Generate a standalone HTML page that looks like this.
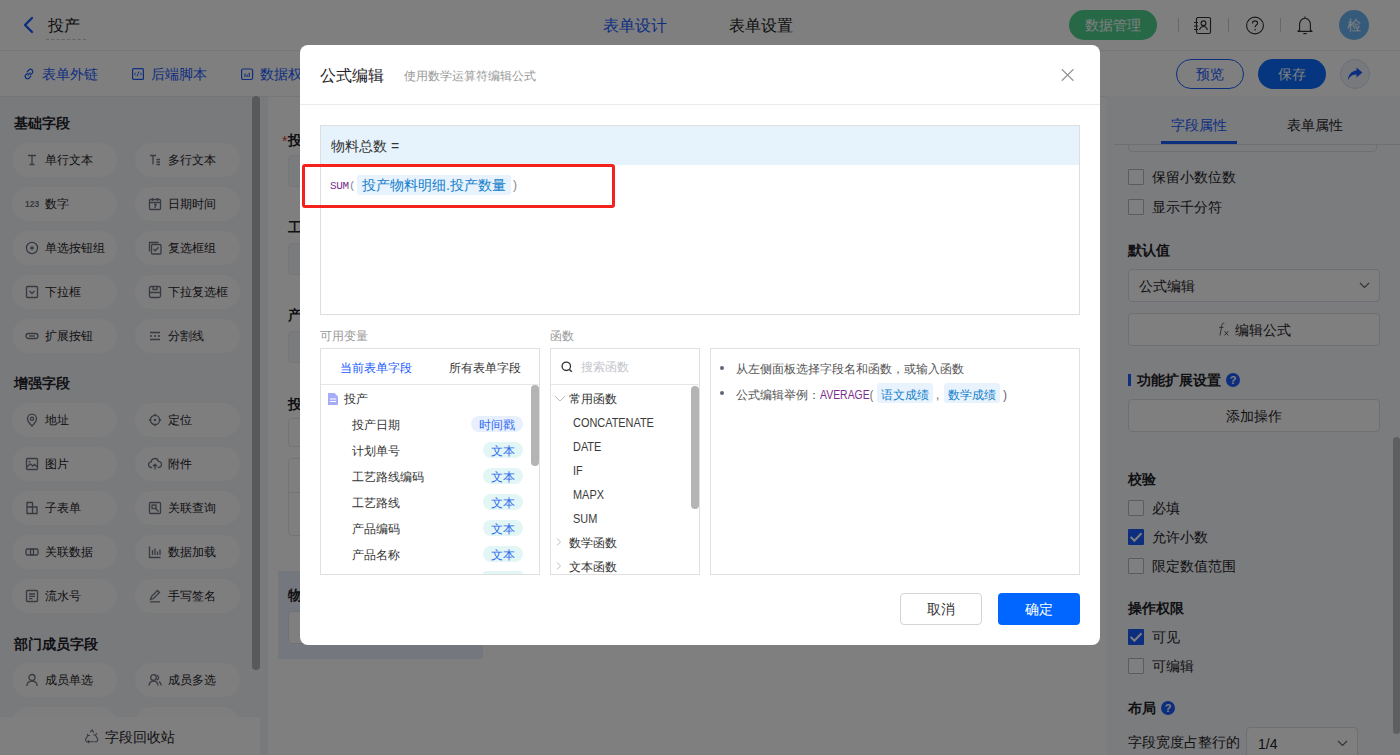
<!DOCTYPE html>
<html><head><meta charset="utf-8">
<style>
*{box-sizing:border-box;margin:0;padding:0}
html,body{width:1400px;height:755px;overflow:hidden;font-family:"Liberation Sans",sans-serif;color:#333;background:#fff}
.a{position:absolute}
.t{position:absolute;white-space:nowrap;line-height:1}
#page{position:absolute;left:0;top:0;width:1400px;height:755px;background:#fff}
#mask{position:absolute;left:0;top:0;width:1400px;height:755px;background:rgba(0,0,0,.5)}
</style></head><body>
<div id="page">
  <!-- header -->
  <div class="a" style="left:0;top:0;width:1400px;height:51px;background:#fff;border-bottom:1px solid #ececec"></div>
  <svg class="a" style="left:20px;top:15px" width="16" height="20" viewBox="0 0 16 20"><polyline points="12,3 5,10 12,17" fill="none" stroke="#1a5cff" stroke-width="2.4" stroke-linecap="round" stroke-linejoin="round"/></svg>
  <div class="t" style="left:48px;top:18px;font-size:16px;color:#222">投产</div>
  <div class="a" style="left:46px;top:39px;width:40px;border-top:1px dashed #c8c8c8"></div>
  <div class="t" style="left:603px;top:18px;font-size:16px;color:#1a5cff">表单设计</div>
  <div class="t" style="left:729px;top:18px;font-size:16px;color:#222">表单设置</div>
  <div class="a" style="left:1069px;top:10px;width:88px;height:30px;border-radius:15px;background:#4fd08f"></div>
  <div class="t" style="left:1085px;top:18px;font-size:14px;color:#fff">数据管理</div>
  <div class="a" style="left:1178px;top:18px;width:1px;height:14px;background:#d0d0d0"></div>
  <div class="a" style="left:1228px;top:18px;width:1px;height:14px;background:#d0d0d0"></div>
  <div class="a" style="left:1280px;top:18px;width:1px;height:14px;background:#d0d0d0"></div>
  <svg class="a" style="left:1192px;top:16px" width="20" height="19" viewBox="0 0 20 19"><rect x="4.5" y="1.5" width="14" height="16" rx="1.5" fill="none" stroke="#333" stroke-width="1.15"/><circle cx="11.5" cy="7.2" r="2.4" fill="none" stroke="#333" stroke-width="1.15"/><path d="M7.6 14c0.5-2.4 1.9-3.5 3.9-3.5s3.4 1.1 3.9 3.5" fill="none" stroke="#333" stroke-width="1.15"/><path d="M2 6.5h4M2 10h4M2 13.5h4" stroke="#333" stroke-width="1.1"/></svg>
  <svg class="a" style="left:1245px;top:16px" width="20" height="20" viewBox="0 0 20 20"><circle cx="10" cy="9.5" r="8.4" fill="none" stroke="#333" stroke-width="1.15"/><path d="M7.4 7.4c0-1.5 1.1-2.6 2.6-2.6s2.6 1 2.6 2.4c0 1.9-2.5 1.9-2.5 4" fill="none" stroke="#333" stroke-width="1.2"/><circle cx="10.1" cy="13.7" r="0.8" fill="#333"/></svg>
  <svg class="a" style="left:1296px;top:15px" width="18" height="20" viewBox="0 0 18 20"><path d="M9 1.5v1.6M3.6 15V9.2c0-3.2 2.4-5.9 5.4-5.9s5.4 2.7 5.4 5.9V15l1.6 1.3H2z" fill="none" stroke="#333" stroke-width="1.15" stroke-linejoin="round"/><path d="M7.3 18.6h3.4" stroke="#333" stroke-width="1.2"/></svg>
  <div class="a" style="left:1339px;top:10px;width:30px;height:30px;border-radius:50%;background:#6ab4f5"></div>
  <div class="t" style="left:1347px;top:18px;font-size:14px;color:#fff">检</div>
  <!-- toolbar -->
  <div class="a" style="left:0;top:51px;width:1400px;height:46px;background:#fff"></div>
  <svg class="a" style="left:22px;top:67px" width="14" height="14" viewBox="0 0 14 14"><path d="M6 8l2.2-2.2M5.2 4.6l1.6-1.6a2.3 2.3 0 0 1 3.3 3.3L8.5 7.9M8.8 9.4l-1.6 1.6a2.3 2.3 0 0 1-3.3-3.3L5.5 6.1" fill="none" stroke="#1a5cff" stroke-width="1.2" stroke-linecap="round"/></svg>
  <div class="t" style="left:42px;top:67px;font-size:14px;color:#1a5cff">表单外链</div>
  <svg class="a" style="left:131px;top:67px" width="14" height="14" viewBox="0 0 14 14"><rect x="1.6" y="1.6" width="10.8" height="10.8" rx="1" fill="none" stroke="#1a5cff" stroke-width="1.2"/><path d="M4.8 5.5L3.4 7l1.4 1.5M9.2 5.5L10.6 7 9.2 8.5M7.8 4.6L6.2 9.4" fill="none" stroke="#1a5cff" stroke-width="0.9"/></svg>
  <div class="t" style="left:151px;top:67px;font-size:14px;color:#1a5cff">后端脚本</div>
  <svg class="a" style="left:240px;top:67px" width="14" height="14" viewBox="0 0 14 14"><rect x="1.6" y="2" width="11" height="10.5" rx="1.5" fill="none" stroke="#1a5cff" stroke-width="1.2"/><path d="M5 6.5v3.5M7.1 7.5v2.5M9.2 5.8v4.2" stroke="#1a5cff" stroke-width="1.1"/></svg>
  <div class="t" style="left:260px;top:67px;font-size:14px;color:#1a5cff">数据权限</div>
  <div class="a" style="left:1176px;top:59px;width:68px;height:30px;border-radius:15px;border:1px solid #1a5cff;background:#fff"></div>
  <div class="t" style="left:1196px;top:67px;font-size:14px;color:#1a5cff">预览</div>
  <div class="a" style="left:1258px;top:59px;width:68px;height:30px;border-radius:15px;background:#0a6cff"></div>
  <div class="t" style="left:1278px;top:67px;font-size:14px;color:#fff">保存</div>
  <div class="a" style="left:1340px;top:59px;width:30px;height:30px;border-radius:50%;border:1px solid #d6def0;background:#eef2fa"></div>
  <svg class="a" style="left:1347px;top:67px" width="17" height="15" viewBox="0 0 17 15"><path d="M9.5 0.6l5.9 4.9-5.9 4.9V7.6C5.8 7.6 3 9.2 0.9 13.1c0.5-5.6 3.5-9 8.6-9.6z" fill="#1a5cff"/></svg>
  <!-- left panel -->
  <div class="a" style="left:0;top:96px;width:268px;height:659px;background:#f3f5f9;border-top:1px solid #e9ebef"></div>
  <div class="t" style="left:14px;top:116px;font-size:14px;font-weight:700;color:#1f2329">基础字段</div>
  <div class="a" style="left:12px;top:143px;width:105px;height:34px;border-radius:17px;background:#fcfcfd"></div>
  <svg class="a" style="left:25px;top:153px" width="14" height="14" viewBox="0 0 14 14"><path d="M3 2.5h8M7 2.5v9M4.5 11.5h5" stroke="#6e7483" fill="none" stroke-width="1.3"/></svg>
  <div class="t" style="left:45px;top:154px;font-size:12px;color:#1f2329">单行文本</div>
  <div class="a" style="left:135px;top:143px;width:105px;height:34px;border-radius:17px;background:#fcfcfd"></div>
  <svg class="a" style="left:148px;top:153px" width="14" height="14" viewBox="0 0 14 14"><path d="M2 2.5h6M5 2.5v9M8.5 6.5h3.5M8.5 9h3.5M8.5 11.5h3.5" stroke="#6e7483" fill="none" stroke-width="1.3"/></svg>
  <div class="t" style="left:168px;top:154px;font-size:12px;color:#1f2329">多行文本</div>
  <div class="a" style="left:12px;top:187px;width:105px;height:34px;border-radius:17px;background:#fcfcfd"></div>
  <svg class="a" style="left:25px;top:197px" width="14" height="14" viewBox="0 0 14 14"><text x="0" y="9.8" font-size="8.5" font-weight="700" fill="#6e7483" font-family="Liberation Sans">123</text></svg>
  <div class="t" style="left:45px;top:198px;font-size:12px;color:#1f2329">数字</div>
  <div class="a" style="left:135px;top:187px;width:105px;height:34px;border-radius:17px;background:#fcfcfd"></div>
  <svg class="a" style="left:148px;top:197px" width="14" height="14" viewBox="0 0 14 14"><rect x="1.5" y="2.5" width="11" height="10" rx="1" stroke="#6e7483" fill="none" stroke-width="1.3"/><path d="M1.5 5.5h11M4.5 1v3M9.5 1v3M6 7.5h2l-1.2 3.5" stroke="#6e7483" fill="none" stroke-width="1.3" stroke-width="1"/></svg>
  <div class="t" style="left:168px;top:198px;font-size:12px;color:#1f2329">日期时间</div>
  <div class="a" style="left:12px;top:231px;width:105px;height:34px;border-radius:17px;background:#fcfcfd"></div>
  <svg class="a" style="left:25px;top:241px" width="14" height="14" viewBox="0 0 14 14"><circle cx="7" cy="7" r="5.6" stroke="#6e7483" fill="none" stroke-width="1.3"/><circle cx="7" cy="7" r="1.8" fill="#6e7483"/></svg>
  <div class="t" style="left:45px;top:242px;font-size:12px;color:#1f2329">单选按钮组</div>
  <div class="a" style="left:135px;top:231px;width:105px;height:34px;border-radius:17px;background:#fcfcfd"></div>
  <svg class="a" style="left:148px;top:241px" width="14" height="14" viewBox="0 0 14 14"><path d="M1.5 10.5V1.5h9" stroke="#6e7483" fill="none" stroke-width="1.3"/><rect x="3.5" y="3.5" width="9.5" height="9.5" rx="1" stroke="#6e7483" fill="none" stroke-width="1.3"/><path d="M5.5 8l1.7 1.7 3.3-3.4" stroke="#6e7483" fill="none" stroke-width="1.3"/></svg>
  <div class="t" style="left:168px;top:242px;font-size:12px;color:#1f2329">复选框组</div>
  <div class="a" style="left:12px;top:275px;width:105px;height:34px;border-radius:17px;background:#fcfcfd"></div>
  <svg class="a" style="left:25px;top:285px" width="14" height="14" viewBox="0 0 14 14"><rect x="1.5" y="1.5" width="11" height="11" rx="1" stroke="#6e7483" fill="none" stroke-width="1.3"/><path d="M4.5 6l2.5 2.5L9.5 6" stroke="#6e7483" fill="none" stroke-width="1.3"/></svg>
  <div class="t" style="left:45px;top:286px;font-size:12px;color:#1f2329">下拉框</div>
  <div class="a" style="left:135px;top:275px;width:105px;height:34px;border-radius:17px;background:#fcfcfd"></div>
  <svg class="a" style="left:148px;top:285px" width="14" height="14" viewBox="0 0 14 14"><rect x="1.5" y="1.5" width="11" height="11" rx="1.5" stroke="#6e7483" fill="none" stroke-width="1.3"/><path d="M1.5 7.5h11M5 1.5v3h4v-3" stroke="#6e7483" fill="none" stroke-width="1.3"/></svg>
  <div class="t" style="left:168px;top:286px;font-size:12px;color:#1f2329">下拉复选框</div>
  <div class="a" style="left:12px;top:319px;width:105px;height:34px;border-radius:17px;background:#fcfcfd"></div>
  <svg class="a" style="left:25px;top:329px" width="14" height="14" viewBox="0 0 14 14"><rect x="1" y="4.5" width="12" height="5" rx="2.5" stroke="#6e7483" fill="none" stroke-width="1.3"/><path d="M4 7h6" stroke="#6e7483" fill="none" stroke-width="1.3"/></svg>
  <div class="t" style="left:45px;top:330px;font-size:12px;color:#1f2329">扩展按钮</div>
  <div class="a" style="left:135px;top:319px;width:105px;height:34px;border-radius:17px;background:#fcfcfd"></div>
  <svg class="a" style="left:148px;top:329px" width="14" height="14" viewBox="0 0 14 14"><path d="M2 3.5h10M2 10.5h10M2 7h2M6 7h2M10 7h2" stroke="#6e7483" fill="none" stroke-width="1.3"/></svg>
  <div class="t" style="left:168px;top:330px;font-size:12px;color:#1f2329">分割线</div>
  <div class="t" style="left:14px;top:376px;font-size:14px;font-weight:700;color:#1f2329">增强字段</div>
  <div class="a" style="left:12px;top:403px;width:105px;height:34px;border-radius:17px;background:#fcfcfd"></div>
  <svg class="a" style="left:25px;top:413px" width="14" height="14" viewBox="0 0 14 14"><path d="M7 13s-4.5-4.3-4.5-7.3a4.5 4.5 0 0 1 9 0C11.5 8.7 7 13 7 13z" stroke="#6e7483" fill="none" stroke-width="1.3"/><circle cx="7" cy="5.8" r="1.6" stroke="#6e7483" fill="none" stroke-width="1.3"/></svg>
  <div class="t" style="left:45px;top:414px;font-size:12px;color:#1f2329">地址</div>
  <div class="a" style="left:135px;top:403px;width:105px;height:34px;border-radius:17px;background:#fcfcfd"></div>
  <svg class="a" style="left:148px;top:413px" width="14" height="14" viewBox="0 0 14 14"><circle cx="7" cy="7" r="4.6" stroke="#6e7483" fill="none" stroke-width="1.3"/><circle cx="7" cy="7" r="1.2" fill="#6e7483"/><path d="M7 0.8v2.4M7 10.8v2.4M0.8 7h2.4M10.8 7h2.4" stroke="#6e7483" fill="none" stroke-width="1.3"/></svg>
  <div class="t" style="left:168px;top:414px;font-size:12px;color:#1f2329">定位</div>
  <div class="a" style="left:12px;top:447px;width:105px;height:34px;border-radius:17px;background:#fcfcfd"></div>
  <svg class="a" style="left:25px;top:457px" width="14" height="14" viewBox="0 0 14 14"><rect x="1.5" y="1.5" width="11" height="11" rx="1" stroke="#6e7483" fill="none" stroke-width="1.3"/><path d="M2 10l3.2-3.2 2.5 2.3 1.8-1.6 2.5 2.3" stroke="#6e7483" fill="none" stroke-width="1.3"/><circle cx="4.5" cy="4.6" r="0.9" fill="#6e7483"/></svg>
  <div class="t" style="left:45px;top:458px;font-size:12px;color:#1f2329">图片</div>
  <div class="a" style="left:135px;top:447px;width:105px;height:34px;border-radius:17px;background:#fcfcfd"></div>
  <svg class="a" style="left:148px;top:457px" width="14" height="14" viewBox="0 0 14 14"><path d="M4.2 10.5H3.5a2.8 2.8 0 0 1-.3-5.6A3.6 3.6 0 0 1 10.3 4.3a3.1 3.1 0 0 1 .2 6.2H9.8M7 12.5V7.3M5 9.2l2-2 2 2" stroke="#6e7483" fill="none" stroke-width="1.3"/></svg>
  <div class="t" style="left:168px;top:458px;font-size:12px;color:#1f2329">附件</div>
  <div class="a" style="left:12px;top:491px;width:105px;height:34px;border-radius:17px;background:#fcfcfd"></div>
  <svg class="a" style="left:25px;top:501px" width="14" height="14" viewBox="0 0 14 14"><path d="M2 1.5h5.5v11H2zM7.5 6h4.5v6.5H7.5M2 6h5.5" stroke="#6e7483" fill="none" stroke-width="1.3"/></svg>
  <div class="t" style="left:45px;top:502px;font-size:12px;color:#1f2329">子表单</div>
  <div class="a" style="left:135px;top:491px;width:105px;height:34px;border-radius:17px;background:#fcfcfd"></div>
  <svg class="a" style="left:148px;top:501px" width="14" height="14" viewBox="0 0 14 14"><rect x="1.5" y="1.5" width="11" height="11" rx="1" stroke="#6e7483" fill="none" stroke-width="1.3"/><rect x="4" y="4" width="4" height="3.5" stroke="#6e7483" fill="none" stroke-width="1.3"/><path d="M7 7l3.5 3.5" stroke="#6e7483" fill="none" stroke-width="1.3"/></svg>
  <div class="t" style="left:168px;top:502px;font-size:12px;color:#1f2329">关联查询</div>
  <div class="a" style="left:12px;top:535px;width:105px;height:34px;border-radius:17px;background:#fcfcfd"></div>
  <svg class="a" style="left:25px;top:545px" width="14" height="14" viewBox="0 0 14 14"><rect x="1" y="4" width="7.5" height="6" rx="1.5" stroke="#6e7483" fill="none" stroke-width="1.3"/><rect x="5.5" y="4" width="7.5" height="6" rx="1.5" stroke="#6e7483" fill="none" stroke-width="1.3"/></svg>
  <div class="t" style="left:45px;top:546px;font-size:12px;color:#1f2329">关联数据</div>
  <div class="a" style="left:135px;top:535px;width:105px;height:34px;border-radius:17px;background:#fcfcfd"></div>
  <svg class="a" style="left:148px;top:545px" width="14" height="14" viewBox="0 0 14 14"><path d="M1.5 1.5v11h11M4.5 5v5M7 3.5v6.5M9.5 6.5v3.5M12 4.5v5.5" stroke="#6e7483" fill="none" stroke-width="1.3"/></svg>
  <div class="t" style="left:168px;top:546px;font-size:12px;color:#1f2329">数据加载</div>
  <div class="a" style="left:12px;top:579px;width:105px;height:34px;border-radius:17px;background:#fcfcfd"></div>
  <svg class="a" style="left:25px;top:589px" width="14" height="14" viewBox="0 0 14 14"><rect x="1.5" y="1.5" width="11" height="11" rx="1" stroke="#6e7483" fill="none" stroke-width="1.3"/><path d="M4 5h6M4 7.3h6M4 9.6h3.5" stroke="#6e7483" fill="none" stroke-width="1.3"/></svg>
  <div class="t" style="left:45px;top:590px;font-size:12px;color:#1f2329">流水号</div>
  <div class="a" style="left:135px;top:579px;width:105px;height:34px;border-radius:17px;background:#fcfcfd"></div>
  <svg class="a" style="left:148px;top:589px" width="14" height="14" viewBox="0 0 14 14"><path d="M2.5 10.5l1-3L9.5 1.5l2 2-6 6zM2 12.8h10" stroke="#6e7483" fill="none" stroke-width="1.3"/></svg>
  <div class="t" style="left:168px;top:590px;font-size:12px;color:#1f2329">手写签名</div>
  <div class="t" style="left:14px;top:637px;font-size:14px;font-weight:700;color:#1f2329">部门成员字段</div>
  <div class="a" style="left:12px;top:663px;width:105px;height:34px;border-radius:17px;background:#fcfcfd"></div>
  <svg class="a" style="left:25px;top:673px" width="14" height="14" viewBox="0 0 14 14"><circle cx="7" cy="4.5" r="3" stroke="#6e7483" fill="none" stroke-width="1.3"/><path d="M1.8 13c.3-3 2.4-4.8 5.2-4.8s4.9 1.8 5.2 4.8" stroke="#6e7483" fill="none" stroke-width="1.3"/></svg>
  <div class="t" style="left:45px;top:674px;font-size:12px;color:#1f2329">成员单选</div>
  <div class="a" style="left:135px;top:663px;width:105px;height:34px;border-radius:17px;background:#fcfcfd"></div>
  <svg class="a" style="left:148px;top:673px" width="14" height="14" viewBox="0 0 14 14"><circle cx="5.5" cy="4.5" r="2.8" stroke="#6e7483" fill="none" stroke-width="1.3"/><path d="M1 12.5c.3-2.8 2.1-4.4 4.5-4.4s4.2 1.6 4.5 4.4M8.8 2a2.8 2.8 0 0 1 0 5.2M11 8.6c1.3.8 2 2.1 2.2 3.9" stroke="#6e7483" fill="none" stroke-width="1.3"/></svg>
  <div class="t" style="left:168px;top:674px;font-size:12px;color:#1f2329">成员多选</div>
  <div class="a" style="left:12px;top:707px;width:105px;height:34px;border-radius:17px;background:#fcfcfd"></div>
  <div class="a" style="left:135px;top:707px;width:105px;height:34px;border-radius:17px;background:#fcfcfd"></div>
  <div class="a" style="left:252px;top:96px;width:8px;height:574px;border-radius:4px;background:#b2b2b2"></div>
  <div class="a" style="left:0;top:717px;width:260px;height:38px;background:#fefefe"></div>
  <svg class="a" style="left:84px;top:729px" width="16" height="15" viewBox="0 0 16 15"><path d="M6.2 3.2L8 1l1.8 2.6M11.5 6.2l2.4 4.3-1 2.2h-2.6M9.8 12.7H4.3M3.8 12.7H2.5L1.5 10.6l2.3-4M5.2 11.3l-1.4 1.4 1.4 1.3M12.9 4.4l-1.4 1.8-2.1-.4M3.2 4.8l.6 1.8 2.1-.2" fill="none" stroke="#6e7483" stroke-width="1.1"/></svg>
  <div class="t" style="left:105px;top:730px;font-size:14px;color:#1f2329">字段回收站</div>
  <!-- canvas -->
  <div class="a" style="left:268px;top:96px;width:838px;height:659px;background:#fff;border-top:1px solid #efefef"></div>
  <div class="t" style="left:282px;top:134px;font-size:14px;color:#e53935">*</div>
  <div class="t" style="left:288px;top:133px;font-size:14px;font-weight:700;color:#1f2329">投产日期</div>
  <div class="a" style="left:288px;top:155px;width:200px;height:32px;border-radius:4px;background:#f5f6f8;border:1px solid #eceef2"></div>
  <div class="t" style="left:288px;top:220px;font-size:14px;font-weight:700;color:#1f2329">工艺路线</div>
  <div class="a" style="left:288px;top:243px;width:200px;height:32px;border-radius:4px;background:#f5f6f8;border:1px solid #eceef2"></div>
  <div class="t" style="left:288px;top:308px;font-size:14px;font-weight:700;color:#1f2329">产品编码</div>
  <div class="a" style="left:288px;top:331px;width:200px;height:32px;border-radius:4px;background:#f5f6f8;border:1px solid #eceef2"></div>
  <div class="t" style="left:288px;top:397px;font-size:14px;font-weight:700;color:#1f2329">投产物料明细</div>
  <div class="a" style="left:288px;top:418px;width:200px;height:29px;border-radius:4px;background:#fff;border:1px solid #e6e8ec"></div>
  <div class="a" style="left:288px;top:458px;width:200px;height:78px;border-radius:4px;background:#fff;border:1px solid #e6e8ec"></div>
  <div class="a" style="left:288px;top:492px;width:200px;height:1px;background:#e6e8ec"></div>
  <div class="a" style="left:278px;top:571px;width:205px;height:88px;background:#e9f0fd"></div>
  <div class="t" style="left:288px;top:588px;font-size:14px;font-weight:700;color:#1f2329">物料总数</div>
  <div class="a" style="left:288px;top:611px;width:190px;height:33px;border-radius:4px;background:#fff;border:1px solid #dfe3ea"></div>
  <!-- right panel -->
  <div class="a" style="left:1106px;top:96px;width:294px;height:659px;background:#f6f8fb"></div>
  <div class="t" style="left:1171px;top:118px;font-size:14px;color:#1a5cff">字段属性</div>
  <div class="t" style="left:1287px;top:118px;font-size:14px;color:#1f2329">表单属性</div>
  <div class="a" style="left:1114px;top:144px;width:286px;height:1px;background:#dcdfe6"></div>
  <div class="a" style="left:1161px;top:141px;width:76px;height:3px;background:#1a5cff"></div>
  <div class="a" style="left:1128px;top:120px;width:249px;height:32px;border-radius:4px;border:1px solid #dcdfe6;clip-path:inset(25px 0 0 0)"></div>
  <div class="a" style="left:1128px;top:169px;width:16px;height:16px;border-radius:1px;border:1px solid #b4b8c0;background:#fff"></div>
  <div class="t" style="left:1152px;top:170px;font-size:14px;color:#1f2329">保留小数位数</div>
  <div class="a" style="left:1128px;top:199px;width:16px;height:16px;border-radius:1px;border:1px solid #b4b8c0;background:#fff"></div>
  <div class="t" style="left:1152px;top:200px;font-size:14px;color:#1f2329">显示千分符</div>
  <div class="t" style="left:1128px;top:243px;font-size:14px;font-weight:700;color:#1f2329">默认值</div>
  <div class="a" style="left:1128px;top:269px;width:252px;height:33px;border-radius:4px;border:1px solid #dcdfe6;background:#fff"></div>
  <div class="t" style="left:1139px;top:279px;font-size:14px;color:#1f2329">公式编辑</div>
  <svg class="a" style="left:1358px;top:280px" width="13" height="10" viewBox="0 0 13 10"><path d="M2 3l4.5 4.5L11 3" fill="none" stroke="#666" stroke-width="1.2"/></svg>
  <div class="a" style="left:1128px;top:313px;width:252px;height:33px;border-radius:4px;border:1px solid #dcdfe6;background:#fff"></div>
  <svg class="a" style="left:1217px;top:322px" width="14" height="15" viewBox="0 0 14 15"><path d="M7.3 1.3c-1.2-0.5-2.1 0.2-2.4 1.6L3 13.6" fill="none" stroke="#555" stroke-width="0.9"/><path d="M2.2 5.4h4.3" stroke="#555" stroke-width="0.9"/><path d="M7.6 9.2l3.6 4.2M11.2 9.2l-3.6 4.2" stroke="#555" stroke-width="1"/></svg>
  <div class="t" style="left:1235px;top:323px;font-size:14px;color:#1f2329">编辑公式</div>
  <div class="a" style="left:1128px;top:374px;width:3px;height:12px;background:#1a5cff"></div>
  <div class="t" style="left:1137px;top:373px;font-size:14px;font-weight:700;color:#1f2329">功能扩展设置</div>
  <div class="a" style="left:1226px;top:373px;width:14px;height:14px;border-radius:50%;background:#1a5cff"></div>
  <div class="t" style="left:1226px;top:375px;width:14px;text-align:center;font-size:11px;font-weight:700;color:#fff">?</div>
  <div class="a" style="left:1128px;top:399px;width:252px;height:33px;border-radius:4px;border:1px solid #dcdfe6;background:#fff"></div>
  <div class="t" style="left:1226px;top:409px;font-size:14px;color:#1f2329">添加操作</div>
  <div class="t" style="left:1128px;top:472px;font-size:14px;font-weight:700;color:#1f2329">校验</div>
  <div class="a" style="left:1128px;top:500px;width:16px;height:16px;border-radius:1px;border:1px solid #b4b8c0;background:#fff"></div>
  <div class="t" style="left:1152px;top:501px;font-size:14px;color:#1f2329">必填</div>
  <div class="a" style="left:1128px;top:529px;width:16px;height:16px;border-radius:1px;background:#1a5cff"></div>
  <svg class="a" style="left:1128px;top:529px" width="16" height="16" viewBox="0 0 16 16"><path d="M2.6 7.9l3.8 3.9 7.1-7.6" fill="none" stroke="#fff" stroke-width="2"/></svg>
  <div class="t" style="left:1152px;top:530px;font-size:14px;color:#1f2329">允许小数</div>
  <div class="a" style="left:1128px;top:558px;width:16px;height:16px;border-radius:1px;border:1px solid #b4b8c0;background:#fff"></div>
  <div class="t" style="left:1152px;top:559px;font-size:14px;color:#1f2329">限定数值范围</div>
  <div class="t" style="left:1128px;top:601px;font-size:14px;font-weight:700;color:#1f2329">操作权限</div>
  <div class="a" style="left:1128px;top:629px;width:16px;height:16px;border-radius:1px;background:#1a5cff"></div>
  <svg class="a" style="left:1128px;top:629px" width="16" height="16" viewBox="0 0 16 16"><path d="M2.6 7.9l3.8 3.9 7.1-7.6" fill="none" stroke="#fff" stroke-width="2"/></svg>
  <div class="t" style="left:1152px;top:630px;font-size:14px;color:#1f2329">可见</div>
  <div class="a" style="left:1128px;top:658px;width:16px;height:16px;border-radius:1px;border:1px solid #b4b8c0;background:#fff"></div>
  <div class="t" style="left:1152px;top:659px;font-size:14px;color:#1f2329">可编辑</div>
  <div class="t" style="left:1128px;top:701px;font-size:14px;font-weight:700;color:#1f2329">布局</div>
  <div class="a" style="left:1161px;top:701px;width:14px;height:14px;border-radius:50%;background:#1a5cff"></div>
  <div class="t" style="left:1161px;top:703px;width:14px;text-align:center;font-size:11px;font-weight:700;color:#fff">?</div>
  <div class="t" style="left:1128px;top:735px;font-size:14px;color:#1f2329">字段宽度占整行的</div>
  <div class="a" style="left:1246px;top:727px;width:112px;height:33px;border-radius:4px;border:1px solid #dcdfe6;background:#fff"></div>
  <div class="t" style="left:1258px;top:737px;font-size:14px;color:#1f2329">1/4</div>
  <svg class="a" style="left:1336px;top:738px" width="13" height="10" viewBox="0 0 13 10"><path d="M2 3l4.5 4.5L11 3" fill="none" stroke="#666" stroke-width="1.2"/></svg>
  <div class="a" style="left:1393px;top:437px;width:7px;height:297px;border-radius:3.5px;background:#bcbec3"></div>
</div>
<div id="mask"></div>
<!-- modal -->
<div class="a" style="left:300px;top:45px;width:800px;height:600px;background:#fff;border-radius:8px"></div>
<div class="t" style="left:320px;top:68px;font-size:16px;color:#1f2329">公式编辑</div>
<div class="t" style="left:404px;top:70px;font-size:12px;color:#999">使用数学运算符编辑公式</div>
<svg class="a" style="left:1061px;top:69px" width="13" height="12" viewBox="0 0 13 12"><path d="M0.8 0.3l11.6 11.4M12.4 0.3L0.8 11.7" stroke="#8f8f8f" stroke-width="1.2"/></svg>
<div class="a" style="left:300px;top:104px;width:800px;height:1px;background:#ebebeb"></div>
<div class="a" style="left:320px;top:125px;width:760px;height:190px;border:1px solid #dedede"></div>
<div class="a" style="left:321px;top:126px;width:758px;height:39px;background:#e6f3fd"></div>
<div class="t" style="left:331px;top:139px;font-size:14px;color:#333">物料总数 =</div>
<div class="t" style="left:330px;top:181px;font-size:11px;font-family:'Liberation Mono',monospace;color:#7b2d8e;letter-spacing:-0.3px">SUM<span style="color:#888">(</span></div>
<div class="a" style="left:357px;top:175px;width:154px;height:20px;border-radius:3px;background:#e8f3fd"></div>
<div class="t" style="left:362px;top:178px;font-size:14px;color:#1580cc">投产物料明细.投产数量</div>
<div class="t" style="left:513px;top:179px;font-size:12px;color:#888">)</div>
<div class="a" style="left:302px;top:164px;width:313px;height:44px;border:3px solid #f5221b;border-radius:3px"></div>

<div class="t" style="left:320px;top:330px;font-size:12px;color:#999">可用变量</div>
<div class="t" style="left:550px;top:330px;font-size:12px;color:#999">函数</div>
<div class="a" style="left:320px;top:348px;width:220px;height:227px;border:1px solid #e0e0e0;overflow:hidden"></div>
<div class="t" style="left:340px;top:362px;font-size:12px;color:#1a5cff">当前表单字段</div>
<div class="t" style="left:449px;top:362px;font-size:12px;color:#333">所有表单字段</div>
<div class="a" style="left:321px;top:384px;width:218px;height:1px;background:#e6e6e6"></div>
<svg class="a" style="left:328px;top:393px" width="10" height="12" viewBox="0 0 10 12"><path d="M0 0h6.5L10 3.5V12H0z" fill="#a4adf6"/><path d="M2 6h6M2 8.5h6" stroke="#fff" stroke-width="1"/></svg>
<div class="t" style="left:344px;top:393px;font-size:12px;color:#333">投产</div>
<div class="t" style="left:352px;top:419px;font-size:12px;color:#333">投产日期</div>
<div class="a" style="left:471px;top:416px;width:52px;height:16px;border-radius:8px;background:#e8f0ff"></div>
<div class="t" style="left:479px;top:419px;font-size:12px;color:#2f6bef">时间戳</div>
<div class="t" style="left:352px;top:445px;font-size:12px;color:#333">计划单号</div>
<div class="a" style="left:483px;top:442px;width:40px;height:16px;border-radius:8px;background:#e3f6f6"></div>
<div class="t" style="left:491px;top:445px;font-size:12px;color:#2f6bef">文本</div>
<div class="t" style="left:352px;top:471px;font-size:12px;color:#333">工艺路线编码</div>
<div class="a" style="left:483px;top:468px;width:40px;height:16px;border-radius:8px;background:#e3f6f6"></div>
<div class="t" style="left:491px;top:471px;font-size:12px;color:#2f6bef">文本</div>
<div class="t" style="left:352px;top:497px;font-size:12px;color:#333">工艺路线</div>
<div class="a" style="left:483px;top:494px;width:40px;height:16px;border-radius:8px;background:#e3f6f6"></div>
<div class="t" style="left:491px;top:497px;font-size:12px;color:#2f6bef">文本</div>
<div class="t" style="left:352px;top:523px;font-size:12px;color:#333">产品编码</div>
<div class="a" style="left:483px;top:520px;width:40px;height:16px;border-radius:8px;background:#e3f6f6"></div>
<div class="t" style="left:491px;top:523px;font-size:12px;color:#2f6bef">文本</div>
<div class="t" style="left:352px;top:549px;font-size:12px;color:#333">产品名称</div>
<div class="a" style="left:483px;top:546px;width:40px;height:16px;border-radius:8px;background:#e3f6f6"></div>
<div class="t" style="left:491px;top:549px;font-size:12px;color:#2f6bef">文本</div>
<div class="a" style="left:483px;top:571px;width:40px;height:3px;border-radius:8px 8px 0 0;background:#e3f6f6"></div>
<div class="a" style="left:531px;top:385px;width:8px;height:81px;border-radius:4px;background:#b4b4b4"></div>
<div class="a" style="left:550px;top:348px;width:150px;height:227px;border:1px solid #e0e0e0"></div>
<svg class="a" style="left:561px;top:361px" width="12" height="12" viewBox="0 0 12 12"><circle cx="5.3" cy="5.3" r="4.2" fill="none" stroke="#333" stroke-width="1.3"/><path d="M8.4 8.4l2.4 2.4" stroke="#333" stroke-width="1.4"/></svg>
<div class="t" style="left:581px;top:361px;font-size:12px;color:#c3c6cc">搜索函数</div>
<div class="a" style="left:551px;top:384px;width:148px;height:1px;background:#e6e6e6"></div>
<svg class="a" style="left:554px;top:394px" width="12" height="9" viewBox="0 0 12 9"><path d="M1 2l5 5 5-5" fill="none" stroke="#bbb" stroke-width="1"/></svg>
<div class="t" style="left:569px;top:393px;font-size:12px;color:#333">常用函数</div>
<div class="t" style="left:573px;top:417px;font-size:12px;color:#3a3a3a;transform:scaleX(0.91);transform-origin:0 0">CONCATENATE</div>
<div class="t" style="left:573px;top:441px;font-size:12px;color:#3a3a3a;transform:scaleX(0.91);transform-origin:0 0">DATE</div>
<div class="t" style="left:573px;top:465px;font-size:12px;color:#3a3a3a;transform:scaleX(0.91);transform-origin:0 0">IF</div>
<div class="t" style="left:573px;top:489px;font-size:12px;color:#3a3a3a;transform:scaleX(0.91);transform-origin:0 0">MAPX</div>
<div class="t" style="left:573px;top:513px;font-size:12px;color:#3a3a3a;transform:scaleX(0.91);transform-origin:0 0">SUM</div>
<svg class="a" style="left:555px;top:537px" width="8" height="10" viewBox="0 0 8 10"><path d="M2 1.5l3.5 3.5L2 8.5" fill="none" stroke="#bbb" stroke-width="1"/></svg>
<div class="t" style="left:569px;top:537px;font-size:12px;color:#333;clip-path:inset(-2px -2px 0px -2px)">数学函数</div>
<svg class="a" style="left:555px;top:561px" width="8" height="10" viewBox="0 0 8 10"><path d="M2 1.5l3.5 3.5L2 8.5" fill="none" stroke="#bbb" stroke-width="1"/></svg>
<div class="t" style="left:569px;top:561px;font-size:12px;color:#333;clip-path:inset(-2px -2px 0px -2px)">文本函数</div>
<div class="a" style="left:691px;top:386px;width:8px;height:123px;border-radius:4px;background:#b4b4b4"></div>
<div class="a" style="left:710px;top:348px;width:370px;height:227px;border:1px solid #e0e0e0"></div>
<div class="a" style="left:720px;top:366px;width:4px;height:4px;border-radius:50%;background:#5f6675"></div>
<div class="a" style="left:720px;top:391px;width:4px;height:4px;border-radius:50%;background:#5f6675"></div>
<div class="t" style="left:736px;top:363px;font-size:12px;color:#555">从左侧面板选择字段名和函数，或输入函数</div>
<div class="t" style="left:736px;top:389px;font-size:12px;color:#555">公式编辑举例：</div>
<div class="t" style="left:820px;top:389px;font-size:12px;color:#7b2d8e;transform:scaleX(0.87);transform-origin:0 0">AVERAGE<span style="color:#666">(</span></div>
<div class="a" style="left:877px;top:383px;width:56px;height:20px;border-radius:3px;background:#e8f3fd"></div>
<div class="t" style="left:881px;top:389px;font-size:12px;color:#1580cc">语文成绩</div>
<div class="t" style="left:936px;top:389px;font-size:12px;color:#666">,</div>
<div class="a" style="left:944px;top:383px;width:56px;height:20px;border-radius:3px;background:#e8f3fd"></div>
<div class="t" style="left:948px;top:389px;font-size:12px;color:#1580cc">数学成绩</div>
<div class="t" style="left:1003px;top:389px;font-size:12px;color:#666">)</div>
<div class="a" style="left:900px;top:593px;width:82px;height:32px;border-radius:4px;border:1px solid #d4d4d4;background:#fff"></div>
<div class="t" style="left:900px;top:602px;width:82px;text-align:center;font-size:14px;color:#333">取消</div>
<div class="a" style="left:998px;top:593px;width:82px;height:32px;border-radius:4px;background:#0066ff"></div>
<div class="t" style="left:998px;top:602px;width:82px;text-align:center;font-size:14px;color:#fff">确定</div>
</body></html>
